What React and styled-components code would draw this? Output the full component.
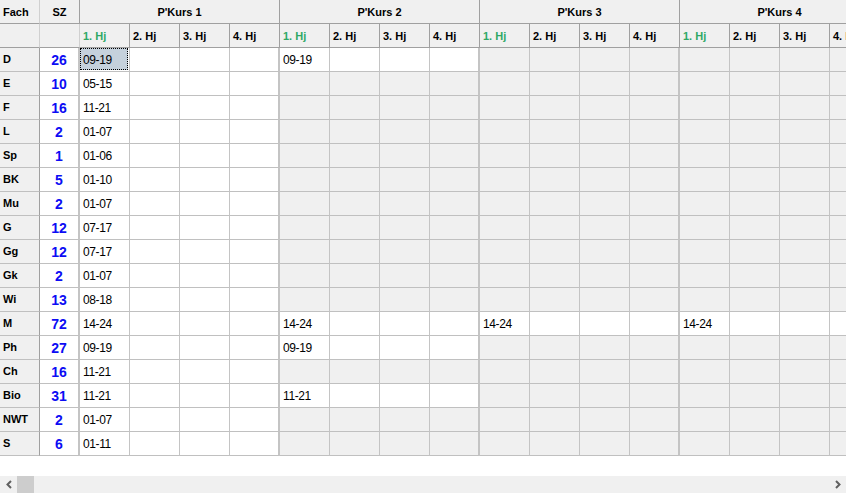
import styled, { createGlobalStyle } from "styled-components";

const GlobalStyle = createGlobalStyle`
  html, body {
    margin: 0;
    padding: 0;
    background: #fff;
  }
  body {
    font-family: "Liberation Sans", Arial, sans-serif;
  }
`;

const kurse = ["P'Kurs 1", "P'Kurs 2", "P'Kurs 3", "P'Kurs 4"];
const halbjahre = ["1. Hj", "2. Hj", "3. Hj", "4. Hj"];

// open: which P'Kurse are editable in this row, wert: text shown in 1. Hj
const rows = [
  { fach: "D", sz: 26, wert: "09-19", open: [0, 1] },
  { fach: "E", sz: 10, wert: "05-15", open: [0] },
  { fach: "F", sz: 16, wert: "11-21", open: [0] },
  { fach: "L", sz: 2, wert: "01-07", open: [0] },
  { fach: "Sp", sz: 1, wert: "01-06", open: [0] },
  { fach: "BK", sz: 5, wert: "01-10", open: [0] },
  { fach: "Mu", sz: 2, wert: "01-07", open: [0] },
  { fach: "G", sz: 12, wert: "07-17", open: [0] },
  { fach: "Gg", sz: 12, wert: "07-17", open: [0] },
  { fach: "Gk", sz: 2, wert: "01-07", open: [0] },
  { fach: "Wi", sz: 13, wert: "08-18", open: [0] },
  { fach: "M", sz: 72, wert: "14-24", open: [0, 1, 2, 3] },
  { fach: "Ph", sz: 27, wert: "09-19", open: [0, 1] },
  { fach: "Ch", sz: 16, wert: "11-21", open: [0] },
  { fach: "Bio", sz: 31, wert: "11-21", open: [0, 1] },
  { fach: "NWT", sz: 2, wert: "01-07", open: [0] },
  { fach: "S", sz: 6, wert: "01-11", open: [0] },
];

const Frame = styled.div`
  width: 846px;
  height: 493px;
  display: flex;
  flex-direction: column;
  overflow: hidden;
  background: #fff;
`;

const Viewport = styled.div`
  flex: 1;
  overflow: hidden;
`;

const Grid = styled.div`
  display: grid;
  grid-template-columns: 40px 40px repeat(16, 50px);
  grid-auto-rows: 24px;
  width: max-content;
  font-size: 11px;
  color: #000;
`;

const Cell = styled.div`
  box-sizing: border-box;
  display: flex;
  align-items: center;
  overflow: hidden;
  white-space: nowrap;
`;

const HeadCell = styled(Cell)`
  background: #f0f0f0;
  font-weight: bold;
  font-size: 11px;
  padding-left: ${(p) => (p.$center ? "0" : "3px")};
  justify-content: ${(p) => (p.$center ? "center" : "flex-start")};
  border-right: 1px solid ${(p) => (p.$light ? "#d0d0d0" : "#a0a0a0")};
  border-bottom: 1px solid #a0a0a0;
  grid-column: span ${(p) => p.$span || 1};
`;

const HjHead = styled(HeadCell)`
  color: ${(p) => (p.$first ? "#2fa866" : "#000")};
`;

const FachCell = styled(Cell)`
  background: #f0f0f0;
  font-weight: bold;
  padding-left: 3px;
  padding-bottom: 2px;
  border-right: 1px solid #a0a0a0;
  border-bottom: 1px solid #c0c0c0;
`;

const SzCell = styled(Cell)`
  background: #fff;
  justify-content: center;
  font-size: 14px;
  font-weight: bold;
  color: #0c0cf4;
  border-right: 2px solid #c4c4c4;
  border-bottom: 1px solid #c0c0c0;
`;

const DataCell = styled(Cell)`
  position: relative;
  background: ${(p) => (p.$open ? "#fff" : "#f0f0f0")};
  padding-left: 3px;
  font-size: 12px;
  letter-spacing: -0.4px;
  border-right: ${(p) => (p.$last ? "2px" : "1px")} solid #c4c4c4;
  border-bottom: 1px solid #c0c0c0;
`;

const Selection = styled.div`
  position: absolute;
  inset: 0 1px 1px 0;
  background: #c5d1dc;
  border: 1px dotted #000;
  box-sizing: border-box;
`;

const CellText = styled.span`
  position: relative;
`;

const ScrollBar = styled.div`
  height: 17px;
  flex-shrink: 0;
  display: flex;
  align-items: center;
  background: #f0f0f0;
`;

const ArrowBox = styled.div`
  width: 17px;
  height: 17px;
  display: flex;
  align-items: center;
  justify-content: center;
  flex-shrink: 0;
`;

const Thumb = styled.div`
  width: 17px;
  height: 17px;
  background: #cdcdcd;
`;

const Track = styled.div`
  flex: 1;
`;

const Chevron = ({ dir }) => (
  <svg width="8" height="9" viewBox="0 0 8 9">
    <polyline
      points={dir === "left" ? "6,1 2.5,4.5 6,8" : "2,1 5.5,4.5 2,8"}
      fill="none"
      stroke="#606060"
      strokeWidth="2"
    />
  </svg>
);

const Row = ({ row, selected }) => (
  <>
    <FachCell>{row.fach}</FachCell>
    <SzCell>{row.sz}</SzCell>
    {kurse.map((k, ki) =>
      halbjahre.map((hj, hi) => {
        const open = row.open.includes(ki);
        const isSel = selected && ki === 0 && hi === 0;
        return (
          <DataCell key={k + hj} $open={open} $last={hi === 3}>
            {isSel && <Selection />}
            {open && hi === 0 && <CellText>{row.wert}</CellText>}
          </DataCell>
        );
      })
    )}
  </>
);

const App = () => {
  return (
    <>
      <GlobalStyle />
      <Frame>
        <Viewport>
          <Grid>
            <HeadCell $light>Fach</HeadCell>
            <HeadCell $center>SZ</HeadCell>
            {kurse.map((k) => (
              <HeadCell key={k} $span={4} $center>
                {k}
              </HeadCell>
            ))}

            <HeadCell $light />
            <HeadCell $light />
            {kurse.map((k) =>
              halbjahre.map((hj, i) => (
                <HjHead key={k + hj} $first={i === 0}>
                  {hj}
                </HjHead>
              ))
            )}

            {rows.map((row, r) => (
              <Row key={row.fach} row={row} selected={r === 0} />
            ))}
          </Grid>
        </Viewport>
        <ScrollBar>
          <ArrowBox>
            <Chevron dir="left" />
          </ArrowBox>
          <Thumb />
          <Track />
          <ArrowBox>
            <Chevron dir="right" />
          </ArrowBox>
        </ScrollBar>
      </Frame>
    </>
  );
};

export default App;
